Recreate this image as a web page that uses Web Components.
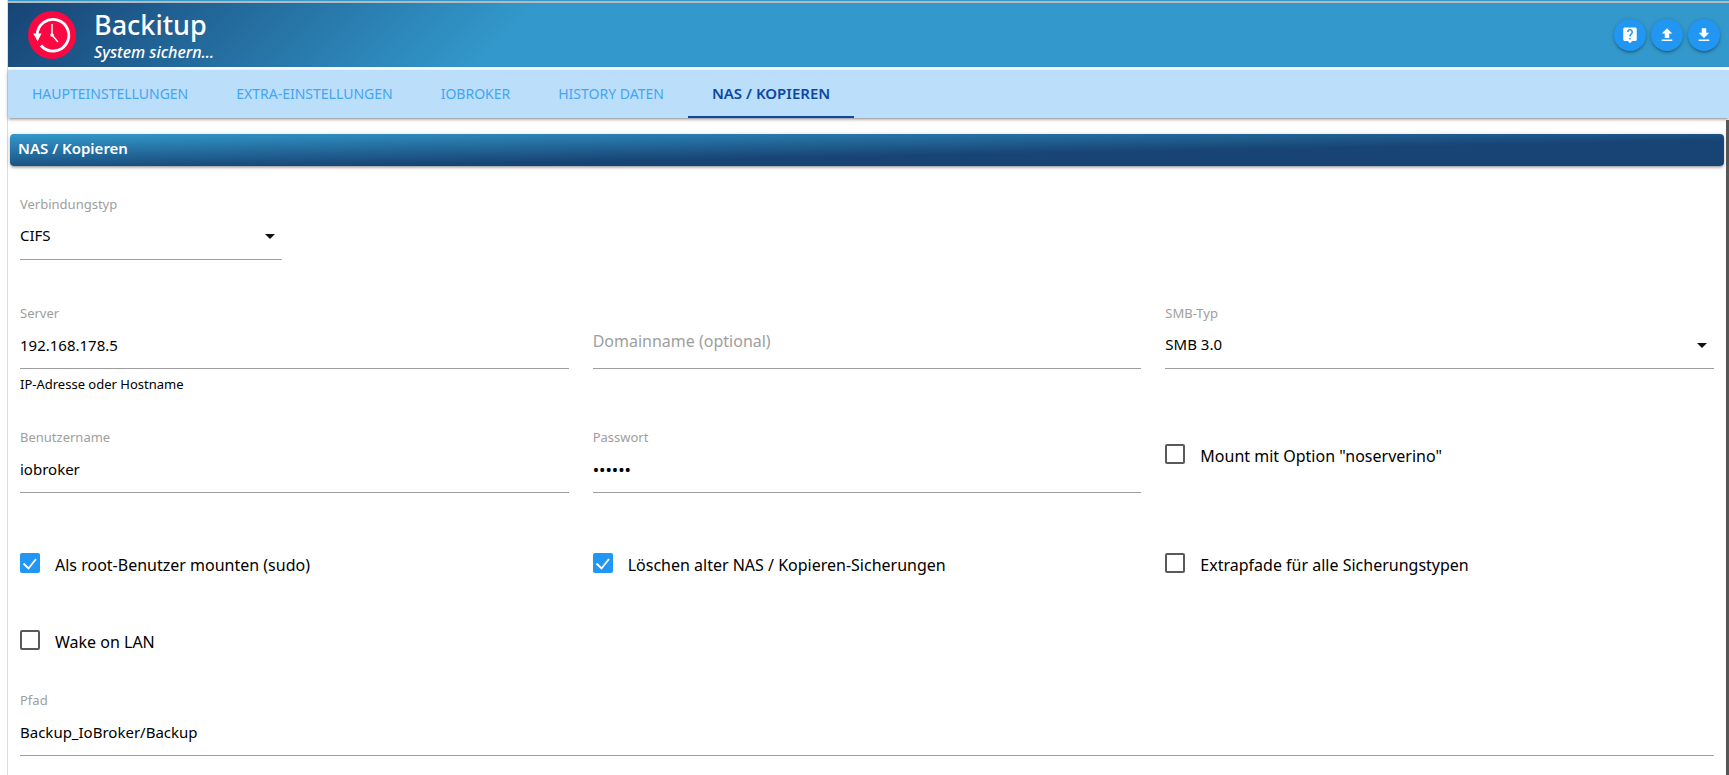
<!DOCTYPE html>
<html lang="de">
<head>
<meta charset="utf-8">
<title>Backitup</title>
<style>
  html { background: #fff; }
  body { margin: 0; font-family: "Noto Sans", "Open Sans", sans-serif; color: #000; }
</style>
</head>
<body>
<backup-app>
  <app-header slot="header" heading="Backitup" subline="System sichern…">
    <round-button icon="help" label="Hilfe"></round-button>
    <round-button icon="upload" label="Einstellungen laden"></round-button>
    <round-button icon="download" label="Einstellungen speichern"></round-button>
  </app-header>
  <tab-bar slot="tabs">
    <tab-link href="#main">HAUPTEINSTELLUNGEN</tab-link>
    <tab-link href="#extra">EXTRA-EINSTELLUNGEN</tab-link>
    <tab-link href="#iobroker">IOBROKER</tab-link>
    <tab-link href="#history">HISTORY DATEN</tab-link>
    <tab-link href="#nas" active>NAS / KOPIEREN</tab-link>
  </tab-bar>

  <section-title>NAS / Kopieren</section-title>
  <form-rows>
    <form-row columns="6">
      <select-field label="Verbindungstyp" options="CIFS,NFS,Copy,Expert"></select-field>
    </form-row>
    <form-row space="large">
      <text-field label="Server" value="192.168.178.5" helper="IP-Adresse oder Hostname"></text-field>
      <text-field placeholder="Domainname (optional)"></text-field>
      <select-field label="SMB-Typ" options="SMB 3.0,SMB 2.1,SMB 2.0,SMB 1.0"></select-field>
    </form-row>
    <form-row space="medium">
      <text-field label="Benutzername" value="iobroker"></text-field>
      <text-field label="Passwort" type="password" value="backup"></text-field>
      <check-field inset>Mount mit Option "noserverino"</check-field>
    </form-row>
    <form-row space="huge">
      <check-field checked>Als root-Benutzer mounten (sudo)</check-field>
      <check-field checked>Löschen alter NAS / Kopieren-Sicherungen</check-field>
      <check-field>Extrapfade für alle Sicherungstypen</check-field>
    </form-row>
    <form-row space="wide">
      <check-field>Wake on LAN</check-field>
    </form-row>
    <form-row space="small" columns="1">
      <text-field label="Pfad" value="Backup_IoBroker/Backup"></text-field>
    </form-row>
  </form-rows>
</backup-app>

<script>
class BaseElement extends HTMLElement {
  connectedCallback() {
    if (this.shadowRoot) return;
    this.attachShadow({ mode: 'open' }).innerHTML =
      `<style>*{box-sizing:border-box}${this.styles()}</style>${this.markup()}`;
  }
  attr(name) { return (this.getAttribute(name) || '').replace(/"/g, '&quot;'); }
}

const SHADOW = '0 2px 2px 0 rgba(0,0,0,.14), 0 3px 1px -2px rgba(0,0,0,.12), 0 1px 5px 0 rgba(0,0,0,.2)';

customElements.define('backup-app', class extends BaseElement {
  styles() { return `
    :host { display: flex; flex-direction: column; min-height: 100vh; margin-left: 7px;
            border-left: 1px solid #dcdcdc; box-sizing: border-box; }
    .strip { height: 3px; background: #3399cc; border-bottom: 2px solid #b8b8b8; }
    main { flex: 1; padding: 14px 2px 19px; border-right: 3px solid #575757; }`; }
  markup() { return `
    <div class="strip"></div>
    <slot name="header"></slot>
    <slot name="tabs"></slot>
    <main><slot></slot></main>`; }
});

customElements.define('app-header', class extends BaseElement {
  styles() { return `
    :host { display: block; }
    header { display: flex; align-items: center; height: 64px; padding: 0 9px 0 20px;
             background: linear-gradient(135deg, #174475 0%, #3399cc 30%); color: #fff; }
    .logo { width: 48px; height: 48px; margin-right: 18px; }
    .titles { flex: 1; }
    h1 { margin: 0; font-size: 27px; line-height: 34px; font-weight: 500; }
    p { margin: 0; font-size: 16px; line-height: 20px; font-weight: 500; font-style: italic; }
    nav { display: flex; gap: 5px; }`; }
  markup() { return `
    <header>
      <svg class="logo" viewBox="0 0 48 48" fill="none" stroke="#fff" aria-hidden="true">
        <circle cx="24" cy="24" r="24" fill="#f90842" stroke="none"/>
        <path d="M9.2 24A15.8 15.8 0 1 1 13 34.5" stroke-width="2.8"/>
        <path d="M5.2 22.6h8.4l-4 7.6z" fill="#fff" stroke="none"/>
        <path d="M24 13v11l6 7" stroke-width="1.5"/>
        <circle cx="24" cy="24" r="1.8" fill="#fff" stroke="none"/>
      </svg>
      <div class="titles"><h1>${this.attr('heading')}</h1><p>${this.attr('subline')}</p></div>
      <nav><slot></slot></nav>
    </header>`; }
});

const ICONS = {
  help: 'M19 2H5c-1.11 0-2 .9-2 2v14c0 1.1.89 2 2 2h4l3 3 3-3h4c1.1 0 2-.9 2-2V4c0-1.1-.9-2-2-2zm-6 16h-2v-2h2v2zm2.07-7.75l-.9.92C13.45 11.9 13 12.5 13 14h-2v-.5c0-1.1.45-2.1 1.17-2.83l1.24-1.26c.37-.36.59-.86.59-1.41 0-1.1-.9-2-2-2s-2 .9-2 2H8c0-2.21 1.79-4 4-4s4 1.79 4 4c0 .88-.36 1.68-.93 2.25z',
  upload: 'M9 16h6v-6h4l-7-7-7 7h4zm-4 2h14v2H5z',
  download: 'M19 9h-4V3H9v6H5l7 7 7-7zM5 18v2h14v-2H5z'
};
customElements.define('round-button', class extends BaseElement {
  styles() { return `
    :host { display: block; }
    button { display: flex; align-items: center; justify-content: center; width: 32px; height: 32px;
             padding: 0; border: 0; border-radius: 50%; background: #2196f3; color: #fff;
             box-shadow: ${SHADOW}; cursor: pointer; }
    svg { width: 18px; height: 18px; }`; }
  markup() { return `
    <button type="button" aria-label="${this.attr('label')}">
      <svg viewBox="0 0 24 24" fill="currentColor" aria-hidden="true"><path d="${ICONS[this.attr('icon')]}"/></svg>
    </button>`; }
});

customElements.define('tab-bar', class extends BaseElement {
  styles() { return `
    :host { display: block; margin: 3px 0 2px; background: #bbdefb; box-shadow: ${SHADOW}; }
    nav { display: flex; height: 48px; }`; }
  markup() { return `<nav><slot></slot></nav>`; }
});

customElements.define('tab-link', class extends BaseElement {
  styles() { return `
    :host { display: block; }
    a { display: block; height: 48px; padding: 0 24px; border-bottom: 2px solid transparent;
        font-size: 14px; line-height: 48px; color: #42a5f5; text-decoration: none; white-space: nowrap; }
    :host([active]) a { font-size: 15px; line-height: 46px; font-weight: 600; color: #0d47a1; border-color: #0d47a1; }`; }
  markup() { return `<a href="${this.attr('href')}"><slot></slot></a>`; }
});

customElements.define('section-title', class extends BaseElement {
  styles() { return `
    :host { display: block; }
    h2 { margin: 0; height: 32px; padding: 0 8px; border-radius: 4px; color: #fff;
         font-size: 15px; line-height: 28px; font-weight: 600;
         background: linear-gradient(to bottom right, #3399cc 0%, #174475 60%); box-shadow: ${SHADOW}; }`; }
  markup() { return `<h2><slot></slot></h2>`; }
});

customElements.define('form-rows', class extends BaseElement {
  styles() { return `:host { display: block; padding: 29px 10px 0; }`; }
  markup() { return `<slot></slot>`; }
});

customElements.define('form-row', class extends BaseElement {
  styles() { return `
    :host { display: grid; grid-template-columns: repeat(${this.getAttribute('columns') || 3}, minmax(0, 1fr)); column-gap: 24px; }
    :host([space="small"]) { margin-top: 39px; }
    :host([space="medium"]) { margin-top: 33px; }
    :host([space="large"]) { margin-top: 44px; }
    :host([space="wide"]) { margin-top: 53px; }
    :host([space="huge"]) { margin-top: 58px; }`; }
  markup() { return `<slot></slot>`; }
});

const FIELD = `
  :host { display: block; }
  label { display: block; height: 20px; font-size: 13px; line-height: 18px; color: #9e9e9e; }
  input, select { display: block; width: 100%; height: 45px; margin: 0; padding: 0 0 2px; border: 0;
    border-bottom: 1px solid #9e9e9e; border-radius: 0; outline: 0; background: transparent;
    font-family: inherit; font-size: 15px; color: #000; }`;

customElements.define('text-field', class extends BaseElement {
  styles() { return `${FIELD}
    ::placeholder { color: #9e9e9e; font-size: 16px; opacity: 1; }
    input:placeholder-shown { padding-bottom: 10px; }
    input[type="password"] { font-size: 17px; }
    .helper { display: block; margin-top: 6px; height: 20px; font-size: 13px; line-height: 18px; }`; }
  markup() {
    const label = this.attr('label'), helper = this.attr('helper'), ph = this.attr('placeholder');
    return `
      <label for="control">${label}</label>
      <input id="control" type="${this.attr('type') || 'text'}" value="${this.attr('value')}"
        ${ph ? `placeholder="${ph}" aria-label="${ph}"` : ''} ${helper ? 'aria-describedby="helper"' : ''}>
      ${helper ? `<span class="helper" id="helper">${helper}</span>` : ''}`;
  }
});

customElements.define('select-field', class extends BaseElement {
  styles() { return `${FIELD}
    select { appearance: none; padding: 0 24px 4px 0;
      background: url("data:image/svg+xml,%3Csvg xmlns='http://www.w3.org/2000/svg' width='24' height='24'%3E%3Cpath d='M7 10l5 5 5-5z' fill='%23111'/%3E%3C/svg%3E") no-repeat right 9px; }`; }
  markup() {
    return `
      <label for="control">${this.attr('label')}</label>
      <select id="control">${this.attr('options').split(',').map(o => `<option>${o}</option>`).join('')}</select>`;
  }
});

customElements.define('check-field', class extends BaseElement {
  styles() { return `
    :host { display: block; }
    :host([inset]) { padding-top: 14px; }
    label { display: flex; align-items: flex-start; gap: 15px; height: 24px; font-size: 16px; line-height: 28px; white-space: nowrap; }
    input { appearance: none; flex: none; width: 20px; height: 20px; margin: 2px 0 0;
            border: 2px solid #5a5a5a; border-radius: 2px; background: #fff; }
    input:checked { border-color: #2196f3;
      background: #2196f3 url("data:image/svg+xml,%3Csvg xmlns='http://www.w3.org/2000/svg' width='20' height='20'%3E%3Cpath d='M3.5 10.5l5 5L16 6' fill='none' stroke='%23fff' stroke-width='1.8'/%3E%3C/svg%3E") center no-repeat; }`; }
  markup() {
    return `<label><input type="checkbox" ${this.hasAttribute('checked') ? 'checked' : ''}><span><slot></slot></span></label>`;
  }
});
</script>
</body>
</html>
